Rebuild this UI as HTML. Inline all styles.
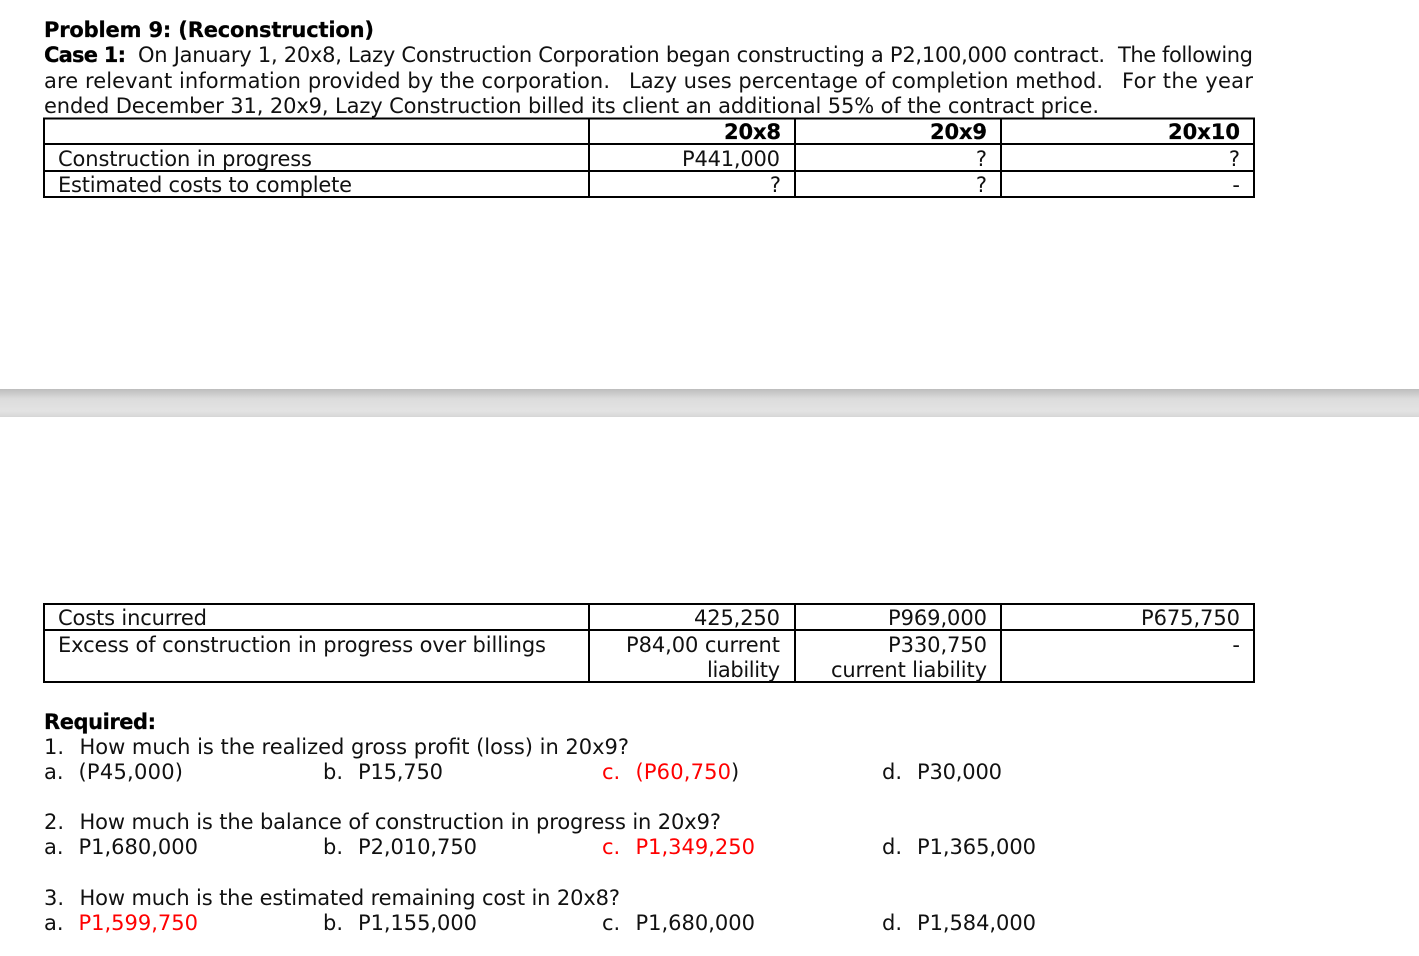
<!DOCTYPE html>
<html><head><meta charset="utf-8"><style>
html,body{margin:0;padding:0;background:#fff;width:1419px;height:956px;overflow:hidden}
svg{position:absolute;left:0;top:0;display:block}
text{font-family:"DejaVu Sans","Liberation Sans",sans-serif;font-size:21px;fill:#111}
.b{font-weight:700;fill:#000;stroke:#000;stroke-width:.25px}
.r{fill:#f00}
.e{text-anchor:end}
</style></head><body>
<svg width="1419" height="956" viewBox="0 0 1419 956" xmlns="http://www.w3.org/2000/svg">
<defs><linearGradient id="g" x1="0" y1="0" x2="0" y2="1"><stop offset="0" stop-color="#bdbdbd"/><stop offset=".35" stop-color="#dcdcdc"/><stop offset=".8" stop-color="#e3e3e3"/><stop offset="1" stop-color="#d6d6d6"/></linearGradient></defs>
<rect x="0" y="389" width="1419" height="28" fill="url(#g)"/>
<text class="b" x="44" y="37" textLength="330">Problem 9: (Reconstruction)</text>
<text class="b" x="44" y="62" textLength="82">Case 1:</text>
<text x="138" y="62" textLength="967">On January 1, 20x8, Lazy Construction Corporation began constructing a P2,100,000 contract.</text>
<text x="1118" y="62" textLength="135">The following</text>
<text x="44" y="88" textLength="566">are relevant information provided by the corporation.</text>
<text x="629" y="88" textLength="474">Lazy uses percentage of completion method.</text>
<text x="1122" y="88" textLength="131">For the year</text>
<text x="44" y="113" textLength="1055">ended December 31, 20x9, Lazy Construction billed its client an additional 55% of the contract price.</text>
<g fill="none" stroke="#000" stroke-width="2">
<rect x="44" y="118.500" width="1210" height="78.500"/>
<path d="M44 144H1254M44 171H1254M589 118.500V197M795 118.500V197M1001 118.500V197"/>
<rect x="44" y="604" width="1210" height="78"/>
<path d="M44 630H1254M589 604V682M795 604V682M1001 604V682"/>
</g>
<text class="b" x="724" y="139" textLength="57">20x8</text>
<text class="b" x="930" y="139" textLength="57">20x9</text>
<text class="b" x="1168" y="139" textLength="72">20x10</text>
<text x="58" y="166" textLength="254">Construction in progress</text>
<text x="682" y="166" textLength="98">P441,000</text>
<text class="e" x="987" y="166">?</text>
<text class="e" x="1240" y="166">?</text>
<text x="58" y="192" textLength="294">Estimated costs to complete</text>
<text class="e" x="781" y="192">?</text>
<text class="e" x="987" y="192">?</text>
<text class="e" x="1240" y="192">-</text>
<text x="58" y="625" textLength="149">Costs incurred</text>
<text x="694" y="625" textLength="86">425,250</text>
<text x="888" y="625" textLength="99">P969,000</text>
<text x="1141" y="625" textLength="99">P675,750</text>
<text x="58" y="652" textLength="488">Excess of construction in progress over billings</text>
<text x="626" y="652" textLength="154">P84,00 current</text>
<text x="888" y="652" textLength="99">P330,750</text>
<text class="e" x="1240" y="652">-</text>
<text x="707" y="677" textLength="73">liability</text>
<text x="831" y="677" textLength="156">current liability</text>
<text class="b" x="44" y="729" textLength="112">Required:</text>
<text x="44" y="754">1.</text><text x="79.500" y="754" textLength="549.500">How much is the realized gross profit (loss) in 20x9?</text>
<text x="44" y="779">a.</text><text x="78.500" y="779" textLength="104.500">(P45,000)</text>
<text x="323" y="779">b.</text><text x="358" y="779" textLength="85">P15,750</text>
<text class="r" x="602" y="779">c.</text><text class="r" x="635.500" y="779" textLength="95.500">(P60,750</text><text x="731" y="779">)</text>
<text x="882" y="779">d.</text><text x="917" y="779" textLength="85">P30,000</text>
<text x="44" y="829">2.</text><text x="79.500" y="829" textLength="641.500">How much is the balance of construction in progress in 20x9?</text>
<text x="44" y="854">a.</text><text x="78.500" y="854" textLength="119.500">P1,680,000</text>
<text x="323" y="854">b.</text><text x="358" y="854" textLength="119">P2,010,750</text>
<text class="r" x="602" y="854">c.</text><text class="r" x="635.500" y="854" textLength="119.500">P1,349,250</text>
<text x="882" y="854">d.</text><text x="917" y="854" textLength="119">P1,365,000</text>
<text x="44" y="905">3.</text><text x="79.500" y="905" textLength="540.500">How much is the estimated remaining cost in 20x8?</text>
<text x="44" y="930">a.</text><text class="r" x="78.500" y="930" textLength="119.500">P1,599,750</text>
<text x="323" y="930">b.</text><text x="358" y="930" textLength="119">P1,155,000</text>
<text x="602" y="930">c.</text><text x="635.500" y="930" textLength="119.500">P1,680,000</text>
<text x="882" y="930">d.</text><text x="917" y="930" textLength="119">P1,584,000</text>
</svg>
</body></html>
